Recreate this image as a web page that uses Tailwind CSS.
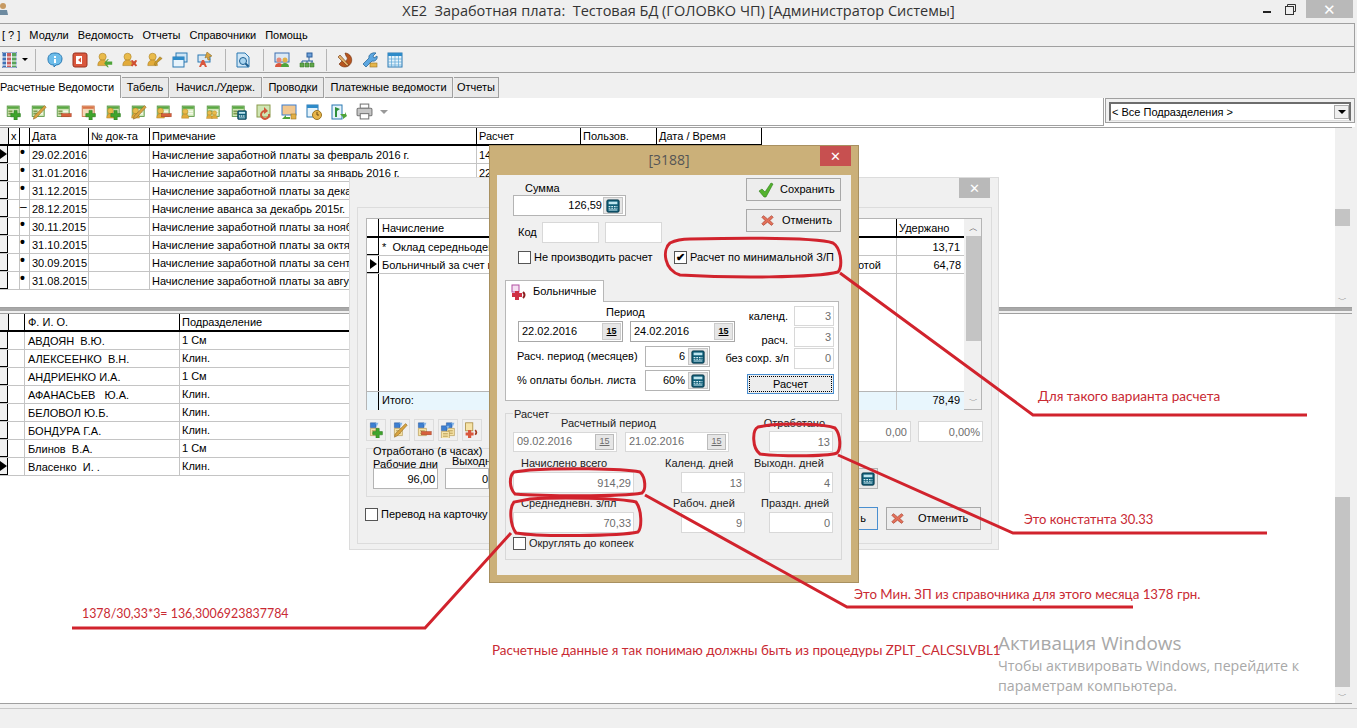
<!DOCTYPE html>
<html lang="ru">
<head>
<meta charset="utf-8">
<script src="https://cdn.jsdelivr.net/npm/@tailwindcss/browser@4"></script>
</head>
<body class="bg-[#f0f0f0] font-['Liberation_Sans',sans-serif] text-[11px] leading-none text-black">
<svg class="hidden" xmlns="http://www.w3.org/2000/svg">
  <symbol id="g" viewBox="0 0 20 20"><rect x="1.5" y="2.5" width="15" height="13" fill="#cfe6b4" stroke="#4f8f3c"/><rect x="2" y="3" width="14" height="3" fill="#5aa845"/><path d="M3 8h5v2H3zM3 11h5v2H3z" fill="#7f9c50"/><path d="M9 8h6v2H9zM9 11h6v2H9z" fill="#f4f8ea"/></symbol>
  <symbol id="plus" viewBox="0 0 20 20"><path d="M10 8h4v4h4v4h-4v4h-4v-4H6v-4h4z" fill="#3fa52c" stroke="#2a7a1e" stroke-width=".7"/></symbol>
  <symbol id="pen" viewBox="0 0 20 20"><path d="M17 2l2 2L7 17l-4 2 1-4z" fill="#d9a441" stroke="#8a6420" stroke-width=".7"/></symbol>
  <symbol id="minus" viewBox="0 0 20 20"><rect x="7" y="12" width="12" height="4" fill="#d7603c" stroke="#a33c20" stroke-width=".6"/></symbol>
  <symbol id="u" viewBox="0 0 20 20"><circle cx="7" cy="6" r="4.5" fill="#e9bb4b" stroke="#a87c1e" stroke-width=".7"/><path d="M1 17c0-5 3-7 6-7s6 2 6 7z" fill="#e2ab3a" stroke="#a87c1e" stroke-width=".7"/></symbol>
  <symbol id="calc" viewBox="0 0 16 16"><rect x="1" y="1" width="14" height="14" rx="1.5" fill="#0f5e78" stroke="#063346"/><rect x="3" y="3" width="10" height="3" fill="#bfe5ef"/><path d="M3 8h2v1H3zM6 8h2v1H6zM9 8h2v1H9zM12 8h1v1h-1zM3 10h2v1H3zM6 10h2v1H6zM9 10h2v1H9zM12 10h1v1h-1zM3 12h10v1H3z" fill="#d6eef5"/></symbol>
  <symbol id="xi" viewBox="0 0 16 16"><path d="M3 2l5 4 5-4 2 2-4 4 4 4-2 2-5-4-5 4-2-2 4-4-4-4z" fill="#e2705a" stroke="#a83f2c" stroke-width=".8"/></symbol>
  <symbol id="doc" viewBox="0 0 20 20"><path d="M3 1h7v6H3z" fill="#3d7fd1" stroke="#1f4f94" stroke-width=".6"/><path d="M9 1l4 0-2 5z" fill="#7fb2e8"/><path d="M3 8h10v9H3z" fill="#f6e3a8" stroke="#a98a3c" stroke-width=".7"/><path d="M5 11h6M5 14h6" stroke="#a98a3c"/></symbol>
</svg>

<main class="flex h-[728px] w-[1357px] flex-col overflow-hidden">
  <header class="relative flex h-[23px] items-center justify-center bg-[#efefef] pb-[1px] font-['Open_Sans',sans-serif] text-[14.5px] text-[#333]">
    <span class="whitespace-pre">XE2  Заработная плата:  Тестовая БД (ГОЛОВКО ЧП) [Администратор Системы]</span>
    <svg class="absolute top-[1px] left-0 h-[17px] w-[9px]" viewBox="0 0 9 17"><circle cx="3" cy="5" r="3" fill="#c79a62"/><path d="M0 9h7l1 5H0z" fill="#6d8aa0"/></svg>
    <div class="absolute top-0 right-[4px] flex items-start">
      <span class="mt-[11px] mr-[14px] h-[2px] w-[8px] bg-[#222]"></span>
      <svg class="mt-[4px] mr-[10px] h-[11px] w-[11px]" viewBox="0 0 11 11" fill="none" stroke="#333"><path d="M2.5 2.5V.5h8v7h-2"/><rect x=".5" y="2.5" width="8" height="8"/></svg>
      <span class="flex h-[18px] w-[47px] items-center justify-center bg-[#b9b9b9] text-[15px] text-white">✕</span>
    </div>
  </header>

  <nav class="flex h-[24px] w-[1355px] items-center gap-[9px] border-y border-r border-[#a0a0a0] px-[2px] pt-[1px]">
    <span>[ ? ]</span><span>Модули</span><span>Ведомость</span><span>Отчеты</span><span>Справочники</span><span>Помощь</span>
  </nav>

  <div class="flex h-[26px] w-[1355px] items-center border-b border-r border-[#a0a0a0]">
    <svg class="ml-[2px] h-[16px] w-[15px]" viewBox="0 0 15 16"><rect width="15" height="16" fill="#eef" stroke="#4b6fa3"/><path d="M1 1h3v14H1z" fill="#3f72b5"/><path d="M5 1h4v14H5z" fill="#c85f5f"/><path d="M10 1h4v14h-4z" fill="#57a35a"/><path d="M0 5h15M0 9h15M0 13h15" stroke="#fff"/></svg>
    <span class="ml-[5px] h-0 w-0 border-x-[3px] border-t-[3px] border-x-transparent border-t-black"></span>
    <span class="mr-[11px] ml-[7px] h-[22px] w-px bg-[#b5b5b5]"></span>
    <div class="flex gap-[9px]">
      <svg class="h-[16px] w-[16px]" viewBox="0 0 16 16"><path d="M8 1c4 0 7 2 7 6s-3 6-6 6l-2 2v-2C3 13 1 11 1 7s3-6 7-6z" fill="#6ebdea" stroke="#2a79b2"/><path d="M7 4h2v2H7zM7 7h2v4H7z" fill="#fff"/></svg>
      <svg class="h-[16px] w-[16px]" viewBox="0 0 16 16"><rect x="1" y="1" width="14" height="14" rx="2" fill="#d9573d" stroke="#9a3220"/><rect x="4" y="4" width="6" height="8" fill="#fff"/><path d="M6 8l3-2.500v5z" fill="#d9573d"/></svg>
      <svg class="h-[16px] w-[16px]" viewBox="0 0 20 20"><use href="#u"/><path d="M19 12h-7l3-3-2 0-4 5 4 5h2l-3-3h7z" fill="#4ea43a"/></svg>
      <svg class="h-[16px] w-[16px]" viewBox="0 0 20 20"><use href="#u"/><path d="M11 11l2-1 2 2 2-2 2 1-2 3 2 3-2 1-2-2-2 2-2-1 2-3z" fill="#cf4e30"/></svg>
      <svg class="h-[16px] w-[16px]" viewBox="0 0 20 20"><use href="#u"/><path d="M19 8l-7 6-1 3-2-1 1-3 6-7z" fill="#c99a2b" stroke="#86641a" stroke-width=".5"/></svg>
      <svg class="h-[16px] w-[16px]" viewBox="0 0 16 16"><rect x="4" y="1" width="11" height="9" fill="#cfe6f6" stroke="#2a79b2"/><rect x="1" y="5" width="11" height="10" fill="#e8f4fc" stroke="#2a79b2"/><rect x="1" y="5" width="11" height="3" fill="#2e8bc9"/></svg>
      <svg class="h-[16px] w-[16px]" viewBox="0 0 16 16"><rect x="1" y="3" width="12" height="7" fill="#dbe9f5" stroke="#2a79b2"/><path d="M2 15l3-7h2l3 7H8l-1-2H5l-1 2z" fill="#d9573d"/><path d="M10 0l5 4-3 1 1 3-2 0-1-3-2 1z" fill="#d9a441" stroke="#86641a" stroke-width=".5"/></svg>
    </div>
    <span class="mr-[9px] ml-[12px] h-[22px] w-px bg-[#b5b5b5]"></span>
    <svg class="h-[16px] w-[16px]" viewBox="0 0 16 16"><path d="M2 1h8l4 4v10H2z" fill="#cfe6f6" stroke="#2a79b2"/><circle cx="8" cy="9" r="3.500" fill="#a9d4ef" stroke="#1d5f91"/><path d="M10.500 11.500l3 3" stroke="#1d5f91" stroke-width="2"/></svg>
    <span class="mr-[10px] ml-[12px] h-[22px] w-px bg-[#b5b5b5]"></span>
    <div class="flex gap-[9px]">
      <svg class="h-[16px] w-[16px]" viewBox="0 0 16 16"><rect x="1" y="1" width="14" height="9" fill="#dbe9f5" stroke="#3d6fb0"/><circle cx="5" cy="8" r="2.500" fill="#e4897a"/><circle cx="11" cy="8" r="2.500" fill="#e2b048"/><path d="M1 15c0-3 2-4 4-4s4 1 4 4z" fill="#d9573d"/><path d="M7 15c0-3 2-4 4-4s4 1 4 4z" fill="#4ea43a"/></svg>
      <svg class="h-[16px] w-[16px]" viewBox="0 0 16 16"><rect x="8" y="1" width="5" height="4" fill="#6fa1d9" stroke="#2a5f9c"/><path d="M10 5v4M3 9h11M3 9v2M8 9v2M13 9v2" stroke="#2a5f9c" fill="none"/><path d="M1 11h4v4H1zM6 11h4v4H6zM11 11h4v4h-4z" fill="#62a64a" stroke="#2f7322" stroke-width=".5"/></svg>
    </div>
    <span class="mr-[10px] ml-[11px] h-[22px] w-px bg-[#b5b5b5]"></span>
    <div class="flex gap-[9px]">
      <svg class="h-[16px] w-[16px]" viewBox="0 0 16 16"><path d="M8 1a7 7 0 1 1-6 11l3-3a3 3 0 1 0 4-5z" fill="#b7551f" stroke="#6f2f0c" stroke-width=".6"/><path d="M3 3l9 10-2 1L1 5z" fill="#e0b06a" stroke="#6f2f0c" stroke-width=".6"/></svg>
      <svg class="h-[16px] w-[16px]" viewBox="0 0 16 16"><path d="M14 1l-3 3 1 2 3-2c1 3-2 6-5 5l-6 6-3-3 6-6c-1-3 3-6 7-5z" fill="#5ca6e0" stroke="#1d5f91" stroke-width=".7"/><rect x="8" y="11" width="7" height="4" fill="#e5b64b" stroke="#9a7420" stroke-width=".6"/></svg>
      <svg class="h-[16px] w-[16px]" viewBox="0 0 16 16"><rect x="1" y="1" width="14" height="14" fill="#e5f3fb" stroke="#2a79b2"/><rect x="1" y="1" width="14" height="3" fill="#2e8bc9"/><path d="M1 7h14M1 10h14M1 13h14M4.500 4v11M8 4v11M11.500 4v11" stroke="#5aa5d6" stroke-width=".7"/></svg>
    </div>
  </div>

  <div class="flex h-[25px] items-end">
    <span class="z-10 flex h-[23px] w-[121px] items-center whitespace-nowrap border-t border-r border-[#a0a0a0] bg-white">Расчетные Ведомости</span>
    <span class="ml-px flex h-[21px] w-[47px] items-center justify-center border-y border-r border-[#a0a0a0] bg-[#eaeaea]">Табель</span>
    <span class="ml-px flex h-[21px] w-[92px] items-center justify-center border-y border-r border-[#a0a0a0] bg-[#eaeaea]">Начисл./Удерж.</span>
    <span class="ml-px flex h-[21px] w-[61px] items-center justify-center border-y border-r border-[#a0a0a0] bg-[#eaeaea]">Проводки</span>
    <span class="ml-px flex h-[21px] w-[128px] items-center justify-center border-y border-r border-[#a0a0a0] bg-[#eaeaea]">Платежные ведомости</span>
    <span class="ml-px flex h-[21px] w-[45px] items-center justify-center border-y border-r border-[#a0a0a0] bg-[#eaeaea]">Отчеты</span>
  </div>

  <div class="flex h-[29px] w-[1355px] bg-white">
    <div class="flex h-[28px] w-[1104px] items-center gap-[9px] border-b border-r border-[#a0a0a0] pl-[6px]">
      <svg class="h-[16px] w-[16px]"><use href="#g"/><use href="#plus"/></svg>
      <svg class="h-[16px] w-[16px]"><use href="#g"/><use href="#pen"/></svg>
      <svg class="h-[16px] w-[16px]"><use href="#g"/><use href="#minus"/></svg>
      <svg class="h-[16px] w-[16px]" viewBox="0 0 20 20"><rect x="1.500" y="2.500" width="15" height="13" fill="#f3d9b8" stroke="#c8683a"/><rect x="2" y="3" width="14" height="3" fill="#d9744a"/><use href="#plus"/></svg>
      <svg class="h-[16px] w-[16px]"><use href="#g"/><use href="#u" width="13" height="13" y="3"/><use href="#plus"/></svg>
      <svg class="h-[16px] w-[16px]"><use href="#g"/><use href="#u" width="13" height="13" y="3"/><use href="#pen"/></svg>
      <svg class="h-[16px] w-[16px]"><use href="#g"/><use href="#u" width="13" height="13" y="3"/><use href="#minus"/></svg>
      <svg class="h-[16px] w-[16px]"><use href="#g"/><use href="#u" width="12" height="12" y="4"/></svg>
      <svg class="h-[16px] w-[16px]"><use href="#g"/><use href="#u" width="10" height="10" y="6"/><use href="#u" width="10" height="10" x="5" y="6"/></svg>
      <svg class="h-[16px] w-[16px]"><use href="#g"/><use href="#calc" width="10" height="10" x="6" y="6"/></svg>
      <svg class="h-[16px] w-[16px]" viewBox="0 0 16 16"><rect x="1" y="1" width="13" height="12" fill="#cfe6b4" stroke="#8a9a4a"/><path d="M14 10a5 5 0 1 1-6-4V3l4 4-4 3V8a3 3 0 1 0 4 2z" fill="#d0573a"/></svg>
      <svg class="h-[16px] w-[16px]" viewBox="0 0 16 16"><rect x="1" y="1" width="14" height="10" fill="#f2c78f" stroke="#3d7fd1"/><path d="M1 15l4-4v2h4v2z" fill="#4ea43a"/><rect x="10" y="10" width="5" height="5" fill="#e2b048" stroke="#9a7420" stroke-width=".6"/></svg>
      <svg class="h-[16px] w-[16px]" viewBox="0 0 16 16"><rect x="1" y="1" width="11" height="12" fill="#e5f3fb" stroke="#2a79b2"/><rect x="1" y="1" width="11" height="3" fill="#2e8bc9"/><circle cx="11" cy="11" r="4.500" fill="#e7b54a" stroke="#9a7420"/><path d="M11 8v3h2" stroke="#6b4a12" fill="none"/></svg>
      <svg class="h-[16px] w-[16px]" viewBox="0 0 16 16"><rect x="1" y="1" width="10" height="14" fill="#e5f3fb" stroke="#2a79b2"/><path d="M4 13V3l5 2-3 2v6z" fill="#2e8f3b"/><path d="M9 10h5v-2l2 4-4 3v-2z" fill="#4ea43a"/></svg>
      <svg class="h-[17px] w-[17px]" viewBox="0 0 16 16"><rect x="4" y="1" width="8" height="4" fill="#fff" stroke="#777"/><rect x="1" y="5" width="14" height="7" rx="1" fill="#c6c6c6" stroke="#777"/><rect x="4" y="10" width="8" height="5" fill="#fff" stroke="#777"/></svg>
      <span class="-ml-[2px] h-0 w-0 border-x-[4px] border-t-[4px] border-x-transparent border-t-[#999]"></span>
    </div>
    <div class="ml-px h-[25px] w-[250px] border border-[#a0a0a0] bg-[#f0f0f0] p-[3px]">
      <div class="flex h-[19px] items-center justify-between border-2 border-b border-[#6d6d6d] border-b-[#ddd] bg-white pl-[1px]">
        <span>&lt; Все Подразделения &gt;</span>
        <span class="flex h-[14px] w-[15px] items-center justify-center border border-[#aaa] bg-[#efefef]"><span class="h-0 w-0 border-x-[4px] border-t-[4px] border-x-transparent border-t-black"></span></span>
      </div>
    </div>
  </div>

  <section class="flex h-[181px] w-[1352px] shrink-0 border-y border-[#a0a0a0] bg-white">
    <div class="w-[1335px]">
      <div class="grid h-[18px] w-[762px] grid-cols-[8px_12px_10px_59px_61px_327px_104px_76px_105px] items-center border-b-2 border-black">
        <span class="h-full bg-[#f0f0f0]"></span><span class="h-full border-x border-black pl-[2px] pt-[3px]">x</span><span class="h-full border-r border-black"></span><span class="h-full border-r border-black pl-[2px] pt-[3px]">Дата</span><span class="h-full border-r border-black pl-[2px] pt-[3px]">№ док-та</span><span class="h-full border-r border-black pl-[2px] pt-[3px]">Примечание</span><span class="h-full border-r border-black pl-[2px] pt-[3px]">Расчет</span><span class="h-full border-r border-black pl-[2px] pt-[3px]">Пользов.</span><span class="h-full border-r border-black pl-[2px] pt-[3px]">Дата / Время</span>
      </div>
      <div class="grid h-[18px] w-[762px] grid-cols-[8px_12px_10px_59px_61px_327px_1fr] items-center border-b border-[#c4c4c4]"><span class="relative h-full border-r border-b border-black bg-[#f0f0f0]"><span class="absolute top-[3px] left-0 h-0 w-0 border-y-[5px] border-l-[7px] border-y-transparent border-l-black"></span></span><span class="h-full border-r border-[#c4c4c4]"></span><span class="h-full border-r border-[#c4c4c4] text-[14px] font-bold leading-[12px]">•</span><span class="h-full border-r border-[#c4c4c4] pl-[2px] pt-[4px]">29.02.2016</span><span class="h-full border-r border-[#c4c4c4]"></span><span class="h-full border-r border-[#c4c4c4] pl-[2px] pt-[4px]">Начисление заработной платы за февраль 2016 г.</span><span class="h-full pl-[2px] pt-[4px]">14</span></div>
      <div class="grid h-[18px] w-[762px] grid-cols-[8px_12px_10px_59px_61px_327px_1fr] items-center border-b border-[#c4c4c4]"><span class="h-full border-r border-b border-black bg-[#f0f0f0]"></span><span class="h-full border-r border-[#c4c4c4]"></span><span class="h-full border-r border-[#c4c4c4] text-[14px] font-bold leading-[12px]">•</span><span class="h-full border-r border-[#c4c4c4] pl-[2px] pt-[4px]">31.01.2016</span><span class="h-full border-r border-[#c4c4c4]"></span><span class="h-full border-r border-[#c4c4c4] pl-[2px] pt-[4px]">Начисление заработной платы за январь 2016 г.</span><span class="h-full pl-[2px] pt-[4px]">22</span></div>
      <div class="grid h-[18px] w-[762px] grid-cols-[8px_12px_10px_59px_61px_327px_1fr] items-center border-b border-[#c4c4c4]"><span class="h-full border-r border-b border-black bg-[#f0f0f0]"></span><span class="h-full border-r border-[#c4c4c4]"></span><span class="h-full border-r border-[#c4c4c4] text-[14px] font-bold leading-[12px]">•</span><span class="h-full border-r border-[#c4c4c4] pl-[2px] pt-[4px]">31.12.2015</span><span class="h-full border-r border-[#c4c4c4]"></span><span class="h-full border-r border-[#c4c4c4] pl-[2px] pt-[4px]">Начисление заработной платы за декабрь 2015 г.</span><span></span></div>
      <div class="grid h-[18px] w-[762px] grid-cols-[8px_12px_10px_59px_61px_327px_1fr] items-center border-b border-[#c4c4c4]"><span class="h-full border-r border-b border-black bg-[#f0f0f0]"></span><span class="h-full border-r border-[#c4c4c4]"></span><span class="h-full border-r border-[#c4c4c4] text-[12px] leading-[14px]">–</span><span class="h-full border-r border-[#c4c4c4] pl-[2px] pt-[4px]">28.12.2015</span><span class="h-full border-r border-[#c4c4c4]"></span><span class="h-full border-r border-[#c4c4c4] pl-[2px] pt-[4px]">Начисление аванса за декабрь 2015г.</span><span></span></div>
      <div class="grid h-[18px] w-[762px] grid-cols-[8px_12px_10px_59px_61px_327px_1fr] items-center border-b border-[#c4c4c4]"><span class="h-full border-r border-b border-black bg-[#f0f0f0]"></span><span class="h-full border-r border-[#c4c4c4]"></span><span class="h-full border-r border-[#c4c4c4] text-[14px] font-bold leading-[12px]">•</span><span class="h-full border-r border-[#c4c4c4] pl-[2px] pt-[4px]">30.11.2015</span><span class="h-full border-r border-[#c4c4c4]"></span><span class="h-full border-r border-[#c4c4c4] pl-[2px] pt-[4px]">Начисление заработной платы за ноябрь 2015 г.</span><span></span></div>
      <div class="grid h-[18px] w-[762px] grid-cols-[8px_12px_10px_59px_61px_327px_1fr] items-center border-b border-[#c4c4c4]"><span class="h-full border-r border-b border-black bg-[#f0f0f0]"></span><span class="h-full border-r border-[#c4c4c4]"></span><span class="h-full border-r border-[#c4c4c4] text-[14px] font-bold leading-[12px]">•</span><span class="h-full border-r border-[#c4c4c4] pl-[2px] pt-[4px]">31.10.2015</span><span class="h-full border-r border-[#c4c4c4]"></span><span class="h-full border-r border-[#c4c4c4] pl-[2px] pt-[4px]">Начисление заработной платы за октябрь 2015 г.</span><span></span></div>
      <div class="grid h-[18px] w-[762px] grid-cols-[8px_12px_10px_59px_61px_327px_1fr] items-center border-b border-[#c4c4c4]"><span class="h-full border-r border-b border-black bg-[#f0f0f0]"></span><span class="h-full border-r border-[#c4c4c4]"></span><span class="h-full border-r border-[#c4c4c4] text-[14px] font-bold leading-[12px]">•</span><span class="h-full border-r border-[#c4c4c4] pl-[2px] pt-[4px]">30.09.2015</span><span class="h-full border-r border-[#c4c4c4]"></span><span class="h-full border-r border-[#c4c4c4] pl-[2px] pt-[4px]">Начисление заработной платы за сентябрь 2015 г.</span><span></span></div>
      <div class="grid h-[18px] w-[762px] grid-cols-[8px_12px_10px_59px_61px_327px_1fr] items-center border-b border-[#c4c4c4]"><span class="h-full border-r border-b border-black bg-[#f0f0f0]"></span><span class="h-full border-r border-[#c4c4c4]"></span><span class="h-full border-r border-[#c4c4c4] text-[14px] font-bold leading-[12px]">•</span><span class="h-full border-r border-[#c4c4c4] pl-[2px] pt-[4px]">31.08.2015</span><span class="h-full border-r border-[#c4c4c4]"></span><span class="h-full border-r border-[#c4c4c4] pl-[2px] pt-[4px]">Начисление заработной платы за август 2015 г.</span><span></span></div>
    </div>
    <div class="flex w-[15px] flex-col bg-[#f0f0f0]">
      <div class="h-[81px] shrink-0"></div><div class="h-[17px] shrink-0 bg-[#c4c4c4]"></div>
      <div class="mt-auto pb-[2px] text-center text-[9px] text-[#555]">﹀</div>
    </div>
    <div class="w-[2px] bg-[#f0f0f0]"></div>
  </section>

  <div class="h-[3px] w-[1352px] shrink-0 bg-[#a8a8a8]"></div>
  <div class="h-[2px] shrink-0"></div>

  <section class="flex h-[391px] w-[1352px] shrink-0 border-y border-[#a0a0a0] bg-white">
    <div class="w-[1335px]">
      <div class="grid h-[18px] w-[350px] grid-cols-[8px_17px_155px_170px] items-center border-b-2 border-black">
        <span class="h-full bg-[#f0f0f0]"></span><span class="h-full border-x border-black"></span><span class="h-full border-r border-black pl-[3px] pt-[3px]">Ф. И. О.</span><span class="pl-[2px] pt-[1px]">Подразделение</span>
      </div>
      <div class="grid h-[18px] w-[350px] grid-cols-[8px_17px_155px_170px] items-center border-b border-[#c4c4c4]"><span class="h-full border-r border-b border-black bg-[#f0f0f0]"></span><span class="h-full border-r border-[#c4c4c4]"></span><span class="h-full border-r border-[#c4c4c4] pl-[3px] pt-[4px] whitespace-pre">АВДОЯН  В.Ю.</span><span class="pl-[2px]">1 См</span></div>
      <div class="grid h-[18px] w-[350px] grid-cols-[8px_17px_155px_170px] items-center border-b border-[#c4c4c4]"><span class="h-full border-r border-b border-black bg-[#f0f0f0]"></span><span class="h-full border-r border-[#c4c4c4]"></span><span class="h-full border-r border-[#c4c4c4] pl-[3px] pt-[4px] whitespace-pre">АЛЕКСЕЕНКО  В.Н.</span><span class="pl-[2px]">Клин.</span></div>
      <div class="grid h-[18px] w-[350px] grid-cols-[8px_17px_155px_170px] items-center border-b border-[#c4c4c4]"><span class="h-full border-r border-b border-black bg-[#f0f0f0]"></span><span class="h-full border-r border-[#c4c4c4]"></span><span class="h-full border-r border-[#c4c4c4] pl-[3px] pt-[4px] whitespace-pre">АНДРИЕНКО И.А.</span><span class="pl-[2px]">1 См</span></div>
      <div class="grid h-[18px] w-[350px] grid-cols-[8px_17px_155px_170px] items-center border-b border-[#c4c4c4]"><span class="h-full border-r border-b border-black bg-[#f0f0f0]"></span><span class="h-full border-r border-[#c4c4c4]"></span><span class="h-full border-r border-[#c4c4c4] pl-[3px] pt-[4px] whitespace-pre">АФАНАСЬЕВ   Ю.А.</span><span class="pl-[2px]">Клин.</span></div>
      <div class="grid h-[18px] w-[350px] grid-cols-[8px_17px_155px_170px] items-center border-b border-[#c4c4c4]"><span class="h-full border-r border-b border-black bg-[#f0f0f0]"></span><span class="h-full border-r border-[#c4c4c4]"></span><span class="h-full border-r border-[#c4c4c4] pl-[3px] pt-[4px] whitespace-pre">БЕЛОВОЛ Ю.Б.</span><span class="pl-[2px]">Клин.</span></div>
      <div class="grid h-[18px] w-[350px] grid-cols-[8px_17px_155px_170px] items-center border-b border-[#c4c4c4]"><span class="h-full border-r border-b border-black bg-[#f0f0f0]"></span><span class="h-full border-r border-[#c4c4c4]"></span><span class="h-full border-r border-[#c4c4c4] pl-[3px] pt-[4px] whitespace-pre">БОНДУРА Г.А.</span><span class="pl-[2px]">Клин.</span></div>
      <div class="grid h-[18px] w-[350px] grid-cols-[8px_17px_155px_170px] items-center border-b border-[#c4c4c4]"><span class="h-full border-r border-b border-black bg-[#f0f0f0]"></span><span class="h-full border-r border-[#c4c4c4]"></span><span class="h-full border-r border-[#c4c4c4] pl-[3px] pt-[4px] whitespace-pre">Блинов  В.А.</span><span class="pl-[2px]">1 См</span></div>
      <div class="grid h-[18px] w-[350px] grid-cols-[8px_17px_155px_170px] items-center border-b border-[#c4c4c4]"><span class="relative h-full border-r border-b border-black bg-[#f0f0f0]"><span class="absolute top-[3px] left-0 h-0 w-0 border-y-[5px] border-l-[7px] border-y-transparent border-l-black"></span></span><span class="h-full border-r border-[#c4c4c4]"></span><span class="h-full border-r border-[#c4c4c4] pl-[3px] pt-[4px] whitespace-pre">Власенко  И. .</span><span class="pl-[2px]">Клин.</span></div>
    </div>
    <div class="flex w-[15px] flex-col bg-[#f0f0f0]">
      <div class="h-[183px] shrink-0"></div><div class="h-[190px] shrink-0 bg-[#c4c4c4]"></div>
      <div class="mt-auto pb-[2px] text-center text-[9px] text-[#555]">﹀</div>
    </div>
    <div class="w-[2px] bg-[#f0f0f0]"></div>
  </section>

  <footer class="mt-[4px] flex-1 border-t border-[#c8c8c8] bg-[#f0f0f0]"></footer>
</main>

<!-- back window -->
<div class="absolute top-[177px] left-[349px] h-[373px] w-[650px] border border-[#dcdcdc] bg-[#f0f0f0] pt-[29px] pl-[7px]">
  <span class="absolute top-0 right-[8px] flex h-[20px] w-[31px] items-center justify-center bg-[#b9b9b9] text-[13px] text-white">✕</span>
  <div class="h-[337px] w-[635px] border border-[#dcdcdc] pt-[10px] pl-[8px]">
    <div class="flex h-[192px] w-[616px] border border-[#b5b5b5] bg-white">
      <div class="flex w-[597px] flex-col">
        <div class="flex h-[19px] border-b-2 border-black">
          <span class="w-[12px] border-r border-black"></span>
          <span class="w-[518px] border-r border-black pl-[3px] pt-[4px]">Начисление</span>
          <span class="pl-[2px] pt-[4px]">Удержано</span>
        </div>
        <div class="flex h-[18px] border-b border-[#c4c4c4]">
          <span class="w-[12px] border-r border-b border-black"></span>
          <span class="w-[518px] border-r border-[#c4c4c4] pl-[3px] pt-[4px] whitespace-pre">*  Оклад середньоденний</span>
          <span class="w-[66px] pr-[3px] pt-[4px] text-right">13,71</span>
        </div>
        <div class="flex h-[18px] border-b border-[#c4c4c4]">
          <span class="relative w-[12px] border-r border-b border-black"><span class="absolute top-[3px] left-[3px] h-0 w-0 border-y-[5px] border-l-[7px] border-y-transparent border-l-black"></span></span>
          <span class="flex w-[518px] justify-between border-r border-[#c4c4c4] pl-[3px] pr-[15px] pt-[4px]"><span>Больничный за счет предприятия</span><span>отой</span></span>
          <span class="w-[66px] pr-[2px] pt-[4px] text-right">64,78</span>
        </div>
        <div class="flex h-[135px]">
          <span class="w-[12px] border-r border-black"></span>
          <span class="w-[518px] border-r border-[#c4c4c4]"></span>
        </div>
      </div>
      <div class="flex w-[17px] flex-col items-center bg-[#f0f0f0] pl-px text-[9px] text-[#555]">
        <span class="h-[17px] pt-[5px]">︿</span>
        <div class="h-[105px] w-[15px] bg-[#c4c4c4]"></div>
        <span class="mt-auto pb-[3px]">﹀</span>
      </div>
    </div>
    <div class="relative -mt-[19px] ml-px flex h-[19px] w-[597px] border-t border-[#b5b5b5] bg-[#e8f6fd]">
      <span class="w-[12px] border-r border-black"></span>
      <span class="w-[518px] border-r border-[#c4c4c4] pl-[3px] pt-[3px]">Итого:</span>
      <span class="w-[66px] pr-[3px] pt-[3px] text-right">78,49</span>
    </div>
    <div class="mt-[9px] flex h-[22px] gap-[4px]">
      <span class="flex h-[22px] w-[20px] items-center justify-center border border-[#dcdcdc]"><svg class="h-[16px] w-[16px]"><use href="#doc"/><use href="#plus"/></svg></span>
      <span class="flex h-[22px] w-[20px] items-center justify-center border border-[#dcdcdc]"><svg class="h-[16px] w-[16px]"><use href="#doc"/><use href="#pen"/></svg></span>
      <span class="flex h-[22px] w-[20px] items-center justify-center border border-[#dcdcdc]"><svg class="h-[16px] w-[16px]"><use href="#doc"/><use href="#minus"/></svg></span>
      <span class="flex h-[22px] w-[20px] items-center justify-center border border-[#dcdcdc]"><svg class="h-[16px] w-[16px]"><use href="#doc" x="4"/><use href="#doc" y="3" x="-1"/></svg></span>
      <span class="flex h-[22px] w-[20px] items-center justify-center border border-[#dcdcdc]"><svg class="h-[16px] w-[16px]" viewBox="0 0 20 20"><rect x="2" y="1" width="9" height="10" fill="#f6e3a8" stroke="#a98a3c"/><path d="M5 10h4v3h3v4H9v3H5v-3H2v-4h3z" fill="#d9573d"/><path d="M14 10q3 3 0 6" stroke="#a33c20" stroke-width="2" fill="none"/></svg></span>
    </div>
    <div class="mt-[7px] h-[49px] w-[124px] border border-[#dcdcdc] pl-[6px] whitespace-nowrap">
      <p class="-mt-[3px]">Отработано (в часах)</p>
      <p class="mt-[2px]">Рабочие дни</p>
    </div>
  </div>
</div>

<!-- bits of the back window that show around the front one -->
<div class="absolute top-[468px] left-[373px] flex h-[21px] w-[116px] gap-[7px]">
  <span class="h-[21px] w-[65px] border border-[#b4b4b4] bg-white pt-[5px] pr-[2px] text-right">96,00</span>
  <span class="h-[21px] w-[44px] border border-[#b4b4b4] bg-white pt-[5px] text-right">0</span>
</div>
<span class="absolute top-[456px] left-[452px] w-[37px] overflow-hidden">Выходн</span>
<label class="absolute top-[508px] left-[365px] flex h-[13px] w-[124px] items-center gap-[3px] overflow-hidden whitespace-nowrap"><span class="h-[13px] w-[13px] shrink-0 border border-[#555] bg-white"></span>Перевод на карточку</label>
<div class="absolute top-[421px] left-[858px] flex h-[21px] gap-[7px] text-[#6d6d6d]">
  <span class="h-[21px] w-[53px] border border-[#d8d8d8] bg-white pt-[5px] pr-[3px] text-right">0,00</span>
  <span class="h-[21px] w-[65px] border border-[#d8d8d8] bg-white pt-[5px] pr-[2px] text-right">0,00%</span>
</div>
<span class="absolute top-[468px] left-[858px] flex h-[21px] w-[20px] items-center justify-center border border-[#b4b4b4] bg-[#e8e8e8]"><svg class="h-[14px] w-[14px]"><use href="#calc"/></svg></span>
<span class="absolute top-[507px] left-[858px] flex h-[23px] w-[20px] items-center justify-end border border-l-0 border-[#4a8fd0] bg-[#ededed] pr-[11px]">ь</span>
<span class="absolute top-[507px] left-[886px] flex h-[23px] w-[95px] items-center gap-[14px] border border-[#a8a8a8] bg-[#ededed] pl-[4px]"><svg class="h-[13px] w-[13px]"><use href="#xi"/></svg>Отменить</span>

<!-- front window -->
<div class="absolute top-[145px] left-[489px] flex h-[438px] w-[370px] flex-col border border-[#a89060] bg-[#cbb079] px-[7px] pb-[7px]">
  <div class="relative flex h-[29px] shrink-0 items-center justify-center pr-[10px] pb-[1px] font-['Open_Sans',sans-serif] text-[14px] text-[#555]">
    [3188]
    <span class="absolute top-0 right-0 flex h-[20px] w-[31px] items-center justify-center bg-[#c75050] text-[13px] text-white">✕</span>
  </div>
  <div class="h-[400px] w-[354px] bg-[#f0f0f0]">
    <div class="flex h-[47px]">
      <div class="w-[249px] pl-[16px]">
        <p class="ml-[12px] h-[20px] pt-[8px]">Сумма</p>
        <div class="flex h-[21px] w-[113px] items-center justify-between border border-[#b4b4b4] bg-white pr-[2px]"><span class="w-[88px] text-right">126,59</span><span class="flex h-[17px] w-[20px] items-center justify-center border border-[#c4c4c4] bg-[#e6e6e6]"><svg class="h-[14px] w-[14px]"><use href="#calc"/></svg></span></div>
      </div>
      <div class="w-[95px] pt-[3px]">
        <span class="flex h-[23px] items-center gap-[6px] border border-[#a8a8a8] bg-[#ededed] pl-[11px]"><svg class="h-[16px] w-[16px]" viewBox="0 0 16 16"><path d="M1 9l3-2 3 3 6-9 2 1-7 13H6z" fill="#54b32f" stroke="#2c7c15" stroke-width=".6"/></svg>Сохранить</span>
      </div>
    </div>
    <div class="flex h-[21px]">
      <div class="flex w-[249px] items-center pl-[21px]">
        <span class="w-[24px]">Код</span>
        <span class="h-[21px] w-[57px] border border-[#d8d8d8] bg-white"></span>
        <span class="ml-[6px] h-[21px] w-[57px] border border-[#d8d8d8] bg-white"></span>
      </div>
      <span class="-mt-[13px] flex h-[23px] w-[95px] items-center gap-[8px] border border-[#a8a8a8] bg-[#ededed] pl-[14px]"><svg class="h-[13px] w-[13px]"><use href="#xi"/></svg>Отменить</span>
    </div>
    <div class="mt-[8px] flex h-[13px] items-center pl-[21px]">
      <span class="h-[13px] w-[13px] border border-[#555] bg-white"></span>
      <span class="ml-[3px] w-[140px]">Не производить расчет</span>
      <span class="flex h-[13px] w-[13px] items-center justify-center border border-[#555] bg-white text-[11px] font-bold">✔</span>
      <span class="ml-[3px]">Расчет по минимальной З/П</span>
    </div>
    <div class="relative z-10 mt-[16px] ml-[8px] flex h-[22px] w-[99px] items-center gap-[6px] border border-b-0 border-[#b8b8b8] bg-white pl-[5px]">
      <svg class="h-[16px] w-[16px]" viewBox="0 0 16 16"><rect x="1" y="1" width="7" height="7" fill="#f6dff2" stroke="#b04fa0"/><path d="M4 7h4v2h3v4H8v3H4v-3H1V9h3z" fill="#cf2f45"/><path d="M12 8q3 3 0 6" stroke="#8c1f20" stroke-width="2" fill="none"/></svg>Больничные
    </div>
    <div class="-mt-px ml-[8px] h-[100px] w-[334px] border border-[#b8b8b8] bg-white pl-[12px]">
      <p class="ml-[88px] h-[19px] pt-[5px]">Период</p>
      <div class="flex gap-[7px]">
        <span class="flex h-[21px] w-[105px] items-center justify-between border border-[#a8a8a8] pr-[1px] pl-[3px]">22.02.2016<span class="flex h-[17px] w-[19px] items-center justify-center border border-[#ccc] bg-[#e6e6e6] text-[9px] font-bold underline">15</span></span>
        <span class="flex h-[21px] w-[105px] items-center justify-between border border-[#a8a8a8] pr-[1px] pl-[3px]">24.02.2016<span class="flex h-[17px] w-[19px] items-center justify-center border border-[#ccc] bg-[#e6e6e6] text-[9px] font-bold underline">15</span></span>
      </div>
    </div>
  </div>
</div>

<!-- side columns of the Больничные tab -->
<div class="absolute top-[306px] left-[723px] flex w-[111px] flex-col gap-px">
  <div class="flex h-[20px] items-center justify-end gap-[6px]"><span>календ.</span><span class="h-[20px] w-[40px] border border-[#d8d8d8] bg-white pt-[4px] pr-[2px] text-right text-[#6d6d6d]">3</span></div>
  <div class="flex h-[20px] items-end justify-end gap-[6px]"><span class="pb-[1px]">расч.</span><span class="h-[20px] w-[40px] border border-[#d8d8d8] bg-white pt-[4px] pr-[2px] text-right text-[#6d6d6d]">3</span></div>
  <div class="flex h-[21px] items-center justify-end gap-[5px]"><span class="whitespace-nowrap">без сохр. з/п</span><span class="h-[21px] w-[40px] border border-[#d8d8d8] bg-white pt-[4px] pr-[2px] text-right text-[#6d6d6d]">0</span></div>
  <span class="mt-[4px] ml-[24px] flex h-[20px] w-[87px] items-center justify-center border border-[#4a8fd0] bg-[#ededed] outline-1 -outline-offset-3 outline-black outline-dotted">Расчет</span>
</div>
<div class="absolute top-[346px] left-[517px] flex w-[193px] flex-col gap-[3px]">
  <div class="flex h-[21px] items-center justify-between"><span class="whitespace-nowrap">Расч. период (месяцев)</span><span class="flex h-[21px] w-[65px] items-center justify-end gap-[3px] border border-[#b4b4b4] bg-white pr-[1px]">6<span class="flex h-[17px] w-[20px] items-center justify-center border border-[#c4c4c4] bg-[#e6e6e6]"><svg class="h-[14px] w-[14px]"><use href="#calc"/></svg></span></span></div>
  <div class="flex h-[21px] items-center justify-between"><span class="whitespace-nowrap">% оплаты больн. листа</span><span class="flex h-[21px] w-[65px] items-center justify-end gap-[3px] border border-[#b4b4b4] bg-white pr-[1px]">60%<span class="flex h-[17px] w-[20px] items-center justify-center border border-[#c4c4c4] bg-[#e6e6e6]"><svg class="h-[14px] w-[14px]"><use href="#calc"/></svg></span></span></div>
</div>

<!-- Расчет group -->
<section class="absolute top-[413px] left-[505px] h-[147px] w-[337px] border border-[#d8d8d8] pl-[7px] text-[#222]">
  <span class="absolute -top-[5px] left-[7px] bg-[#f0f0f0] px-px">Расчет</span>
  <div class="ml-[48px] flex h-[17px] w-[272px] items-end justify-between pr-[8px] pb-[2px]"><span>Расчетный период</span><span>Отработано</span></div>
  <div class="flex h-[21px] items-center text-[#6d6d6d]">
    <span class="flex h-[20px] w-[104px] items-center justify-between border border-[#d8d8d8] bg-white pr-[2px] pl-[3px]">09.02.2016<span class="flex h-[16px] w-[19px] items-center justify-center border border-[#bbb] bg-[#e6e6e6] text-[9px] underline">15</span></span>
    <span class="ml-[8px] flex h-[20px] w-[104px] items-center justify-between border border-[#d8d8d8] bg-white pr-[2px] pl-[3px]">21.02.2016<span class="flex h-[16px] w-[19px] items-center justify-center border border-[#bbb] bg-[#e6e6e6] text-[9px] underline">15</span></span>
    <span class="ml-[40px] h-[21px] w-[64px] border border-[#d8d8d8] bg-white pt-[5px] pr-[2px] text-right">13</span>
  </div>
  <div class="flex h-[20px] items-end pb-[3px]"><span class="ml-[8px] w-[144px]">Начислено всего</span><span class="w-[89px]">Календ. дней</span><span>Выходн. дней</span></div>
  <div class="flex h-[21px] text-[#6d6d6d]">
    <span class="h-[21px] w-[121px] border border-[#d8d8d8] bg-white pt-[5px] pr-[2px] text-right">914,29</span>
    <span class="ml-[47px] h-[21px] w-[64px] border border-[#d8d8d8] bg-white pt-[5px] pr-[2px] text-right">13</span>
    <span class="ml-[24px] h-[21px] w-[64px] border border-[#d8d8d8] bg-white pt-[5px] pr-[2px] text-right">4</span>
  </div>
  <div class="flex h-[19px] items-end pb-[3px]"><span class="ml-[8px] w-[152px]">Среднедневн. з/пл</span><span class="w-[88px]">Рабоч. дней</span><span>Праздн. дней</span></div>
  <div class="flex h-[21px] text-[#6d6d6d]">
    <span class="h-[21px] w-[121px] border border-[#d8d8d8] bg-white pt-[5px] pr-[2px] text-right">70,33</span>
    <span class="ml-[47px] h-[21px] w-[64px] border border-[#d8d8d8] bg-white pt-[5px] pr-[2px] text-right">9</span>
    <span class="ml-[24px] h-[21px] w-[64px] border border-[#d8d8d8] bg-white pt-[5px] pr-[2px] text-right">0</span>
  </div>
  <div class="mt-[4px] flex items-center gap-[3px]"><span class="h-[13px] w-[13px] border border-[#555] bg-white"></span>Округлять до копеек</div>
</section>

<!-- hand-drawn annotations -->
<svg class="pointer-events-none absolute top-0 left-0 h-[728px] w-[1357px]" viewBox="0 0 1357 728" fill="none" stroke="#d1232d" stroke-width="3">
  <path d="M840 273L1033 415H1307"/>
  <path d="M838 455L1013 533H1267"/>
  <path d="M645 495L847 607H1133"/>
  <path d="M511 533L425 628H72"/>
  <path d="M690 239C740 238 815 237 833 243C841 248 843 266 838 272C815 278 730 278 680 275C664 270 662 250 670 243C676 240 684 239 690 239Z"/>
  <path d="M770 425C790 423 825 424 835 428C841 435 841 449 837 453C825 457 775 456 760 454C752 448 752 430 758 427Z"/>
  <path d="M530 470C560 468 620 468 640 472C646 478 646 490 642 493C620 497 540 496 515 494C509 488 509 476 514 472Z"/>
  <path d="M530 499C560 497 620 498 636 502C642 510 642 528 638 532C620 536 540 537 516 533C510 525 509 508 514 502Z"/>
</svg>
<p class="absolute top-[390px] left-[1038px] font-['Lato',sans-serif] text-[13.6px] text-[#c92a33]">Для такого варианта расчета</p>
<p class="absolute top-[513px] left-[1024px] font-['Lato',sans-serif] text-[13px] text-[#c92a33]">Это констатнта 30.33</p>
<p class="absolute top-[588px] left-[854px] font-['Lato',sans-serif] text-[13.3px] text-[#c92a33]">Это Мин. ЗП из справочника для этого месяца 1378 грн.</p>
<p class="absolute top-[608px] left-[82px] font-['Lato',sans-serif] text-[12.4px] text-[#c92a33]">1378/30,33*3= 136,3006923837784</p>
<p class="absolute top-[644px] left-[492px] font-['Lato',sans-serif] text-[13.45px] text-[#c92a33]">Расчетные данные я так понимаю должны быть из процедуры ZPLT_CALCSLVBL1</p>
<div class="absolute top-[633px] left-[998px] font-['Open_Sans',sans-serif] text-[#a8a8a8]">
  <p class="text-[18.9px] leading-[20px]">Активация Windows</p>
  <p class="mt-[3px] text-[14.2px] leading-[20px]">Чтобы активировать Windows, перейдите к<br>параметрам компьютера.</p>
</div>
</body>
</html>
